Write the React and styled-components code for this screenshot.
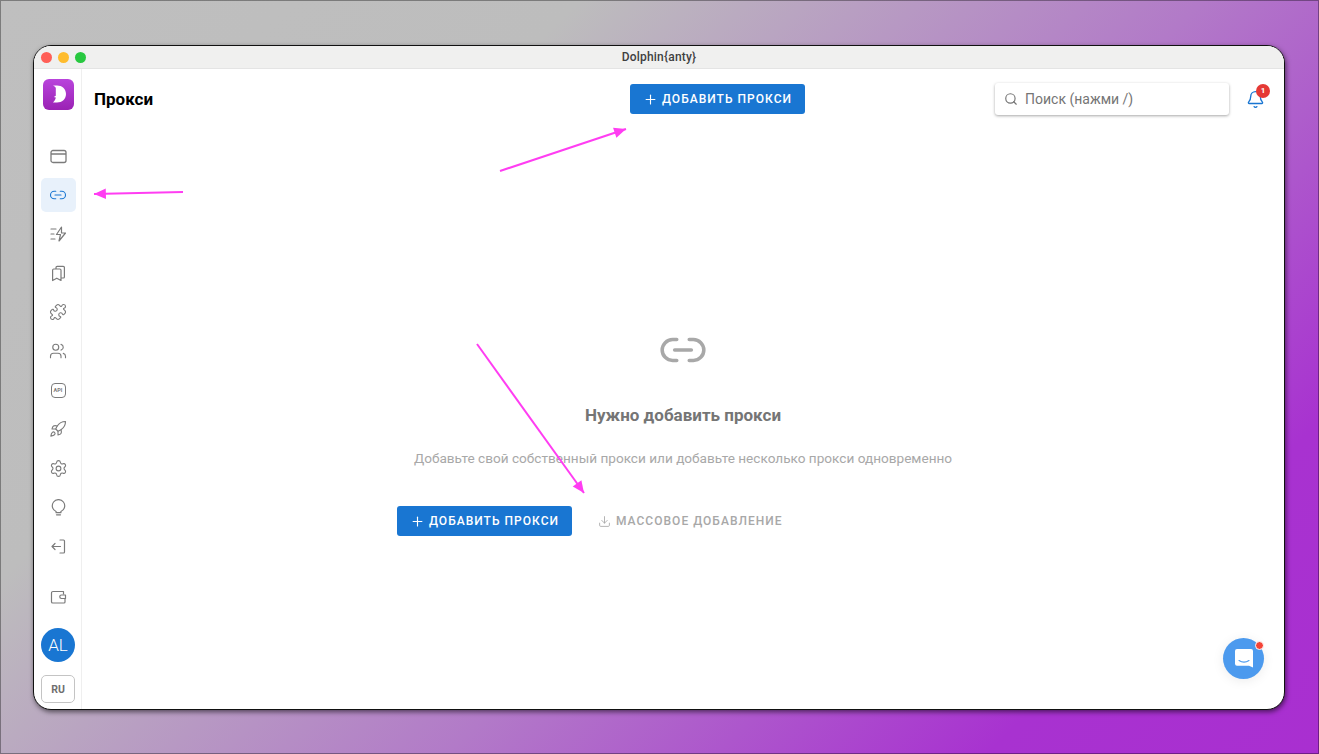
import React from 'react';
import styled, { createGlobalStyle } from 'styled-components';
import { Link2, Plus, Puzzle, Users, Rocket, Settings, Search, Bell, Download } from 'lucide-react';

const GlobalStyle = createGlobalStyle`
  html, body {
    margin: 0;
    padding: 0;
    height: 100%;
    overflow: hidden;
  }
  body {
    font-family: Roboto, "Liberation Sans", sans-serif;
  }
`;

const Page = styled.div`
  position: relative;
  box-sizing: border-box;
  width: 1319px;
  height: 754px;
  padding: 45px 34px 44px 33px;
  background: linear-gradient(135deg, #bfbfbf 0%, #bdbdbd 28%, #b27ac8 58%, #a832d0 84%, #a92fd0 100%);
  box-shadow: inset 0 0 0 1px rgba(0, 0, 0, 0.35);
`;

const Window = styled.div`
  display: flex;
  flex-direction: column;
  box-sizing: border-box;
  height: 100%;
  background: #fff;
  border: 1px solid #111;
  border-radius: 18px;
  overflow: hidden;
  box-shadow: 1px 2px 5px rgba(0, 0, 0, 0.55);
`;

const TitleBar = styled.div`
  position: relative;
  display: flex;
  align-items: center;
  justify-content: center;
  box-sizing: border-box;
  flex: 0 0 23px;
  background: #f0f0ef;
  border-bottom: 1px solid #e4e4e4;
  font-size: 12px;
  font-weight: 500;
  letter-spacing: 0.2px;
  color: #3f3f3f;
`;

const Lights = styled.div`
  position: absolute;
  left: 7px;
  top: 6px;
  display: flex;
  gap: 6px;
`;

const Light = styled.span`
  width: 11px;
  height: 11px;
  border-radius: 50%;
  background: ${(p) => p.color};
`;

const Body = styled.div`
  display: flex;
  flex: 1;
  min-height: 0;
`;

const Sidebar = styled.aside`
  display: flex;
  flex-direction: column;
  align-items: center;
  box-sizing: border-box;
  flex: 0 0 48px;
  padding: 10px 0 0 1px;
  border-right: 1px solid #efefef;
`;

const Logo = styled.div`
  width: 31px;
  height: 31px;
  margin-bottom: 29px;
`;

const Nav = styled.nav`
  display: flex;
  flex-direction: column;
  align-items: center;
  gap: 5px;
`;

const NavItem = styled.div`
  display: flex;
  align-items: center;
  justify-content: center;
  width: 35px;
  height: 34px;
  border-radius: 5px;
  color: ${(p) => (p.$active ? '#1976d2' : '#7b7b7b')};
  background: ${(p) => (p.$active ? '#e8f1fb' : 'transparent')};
`;

const ApiIcon = styled.div`
  display: flex;
  align-items: center;
  justify-content: center;
  box-sizing: border-box;
  width: 15px;
  height: 15px;
  border: 1.2px solid #7b7b7b;
  border-radius: 4px;
  font-size: 5.5px;
  font-weight: 700;
  color: #7b7b7b;
`;

const WalletItem = styled(NavItem)`
  margin-top: 17px;
`;

const Avatar = styled.div`
  display: flex;
  align-items: center;
  justify-content: center;
  width: 34px;
  height: 34px;
  margin-top: 14px;
  border-radius: 50%;
  background: #1976d2;
  color: #fff;
  font-size: 17px;
  font-weight: 300;
`;

const LangButton = styled.div`
  display: flex;
  align-items: center;
  justify-content: center;
  box-sizing: border-box;
  width: 34px;
  height: 28px;
  margin-top: 13px;
  border: 1px solid #c4c4c4;
  border-radius: 5px;
  font-size: 10.5px;
  font-weight: 700;
  color: #6f6f6f;
`;

const Main = styled.main`
  position: relative;
  display: flex;
  flex-direction: column;
  flex: 1;
  min-width: 0;
`;

const Header = styled.header`
  display: flex;
  align-items: center;
  padding: 14px 19px 0 12px;
`;

const PageTitle = styled.h1`
  flex: 0 0 536px;
  margin: 0;
  font-size: 17px;
  font-weight: 700;
  color: #000;
`;

const PrimaryButton = styled.button`
  display: flex;
  align-items: center;
  justify-content: center;
  gap: 4px;
  box-sizing: border-box;
  width: 175px;
  height: 30px;
  padding: 0;
  border: 0;
  border-radius: 3px;
  background: #1976d2;
  color: #fff;
  font-family: inherit;
  font-size: 12px;
  font-weight: 500;
  letter-spacing: 1.02px;
`;

const SearchBox = styled.div`
  display: flex;
  align-items: center;
  gap: 7px;
  box-sizing: border-box;
  width: 234px;
  height: 32px;
  margin-left: auto;
  padding-left: 9px;
  border-radius: 3px;
  background: #fff;
  box-shadow: 0 1px 3px rgba(0, 0, 0, 0.35);
  font-size: 14px;
  color: #757575;
`;

const BellWrap = styled.div`
  position: relative;
  display: flex;
  margin-left: 17px;
  color: #1976d2;
`;

const Badge = styled.span`
  position: absolute;
  top: -6px;
  right: -5px;
  display: flex;
  align-items: center;
  justify-content: center;
  width: 14px;
  height: 14px;
  border-radius: 50%;
  background: #e53935;
  color: #fff;
  font-size: 8px;
  font-weight: 700;
`;

const Empty = styled.section`
  display: flex;
  flex-direction: column;
  align-items: center;
  margin-top: 210px;
`;

const EmptyIcon = styled.div`
  display: flex;
  color: #a8a8a8;
`;

const EmptyTitle = styled.h2`
  margin: 30px 0 0;
  font-size: 17px;
  line-height: 20px;
  font-weight: 700;
  color: #757575;
`;

const EmptyText = styled.p`
  margin: 24px 0 0;
  font-size: 13.6px;
  line-height: 18px;
  color: #a8a8a8;
`;

const Actions = styled.div`
  display: flex;
  align-items: center;
  gap: 26px;
  width: 572px;
  margin-top: 39px;
`;

const GhostButton = styled.div`
  display: flex;
  align-items: center;
  gap: 5px;
  color: #a8a8a8;
  font-size: 12px;
  font-weight: 500;
  letter-spacing: 1.02px;
`;

const ChatButton = styled.div`
  position: absolute;
  right: 20px;
  bottom: 30px;
  display: flex;
  align-items: center;
  justify-content: center;
  width: 41px;
  height: 41px;
  border-radius: 50%;
  background: #4c9aee;
  box-shadow: 0 2px 12px rgba(0, 0, 0, 0.08);
`;

const ChatDot = styled.span`
  position: absolute;
  top: 3px;
  right: 0;
  width: 7px;
  height: 7px;
  border-radius: 50%;
  background: #f44336;
  border: 0.5px solid #fff;
`;

const Annotations = styled.svg`
  position: absolute;
  left: 0;
  top: 0;
  pointer-events: none;
`;

const iconProps = { size: 18, strokeWidth: 1.5 };

const WindowIcon = () => (
  <svg width="17" height="17" viewBox="0 0 17 17" fill="none" stroke="currentColor" strokeWidth="1.3">
    <rect x="1" y="2.5" width="15" height="12" rx="2" />
    <path d="M1 6h15" />
  </svg>
);

const ZapLinesIcon = () => (
  <svg width="17" height="17" viewBox="0 0 17 17" fill="none" stroke="currentColor" strokeWidth="1.2" strokeLinejoin="round" strokeLinecap="round">
    <path d="M1 3h5M1 8h3M1 13h4" />
    <path d="M11.5 1 6.500 8.500h4l-1.500 6.500 6.500-8h-4z" />
  </svg>
);

const CopiesIcon = () => (
  <svg width="17" height="17" viewBox="0 0 17 17" fill="none" stroke="currentColor" strokeWidth="1.2" strokeLinejoin="round">
    <path d="M6 4V2.500A1.200 1.200 0 0 1 7.200 1.300h6a1.200 1.200 0 0 1 1.200 1.200v9.500a1 1 0 0 1-1 1H11" />
    <path d="M3.800 4h6a1.200 1.200 0 0 1 1.200 1.200v10.300l-4.200-2.300-4.200 2.300V5.200A1.200 1.200 0 0 1 3.800 4z" />
  </svg>
);

const BulbIcon = () => (
  <svg width="17" height="17" viewBox="0 0 17 17" fill="none" stroke="currentColor" strokeWidth="1.2" strokeLinecap="round" strokeLinejoin="round">
    <path d="M6.100 12.500a6.200 6.200 0 1 1 4.800 0v1.200H6.100z" />
    <path d="M6.500 15.800h4" />
  </svg>
);

const ExitIcon = () => (
  <svg width="17" height="17" viewBox="0 0 17 17" fill="none" stroke="currentColor" strokeWidth="1.2" strokeLinecap="round" strokeLinejoin="round">
    <path d="M10 2h3.500a1 1 0 0 1 1 1v11a1 1 0 0 1-1 1H10" />
    <path d="M10.500 8.500H2M5 5.500l-3 3 3 3" />
  </svg>
);

const WalletIcon = () => (
  <svg width="17" height="17" viewBox="0 0 17 17" fill="none" stroke="currentColor" strokeWidth="1.2" strokeLinejoin="round">
    <path d="M3 2.500h10.500v3M15 9.500V13a1 1 0 0 1-1 1H2.800a1.300 1.300 0 0 1-1.300-1.300V4A1.500 1.500 0 0 1 3 2.500" />
    <path d="M11.500 6h4v3.500h-4a1.700 1.700 0 0 1 0-3.500z" />
  </svg>
);

const LogoMark = () => (
  <svg width="31" height="31" viewBox="0 0 31 31">
    <defs>
      <linearGradient id="logoFill" x1="0" y1="0" x2="0" y2="1">
        <stop offset="0" stopColor="#b944dc" />
        <stop offset="1" stopColor="#9a22b4" />
      </linearGradient>
    </defs>
    <rect width="31" height="31" rx="6" fill="url(#logoFill)" />
    <path d="M10 6.500h4c5 0 9 3.400 9 8.500s-4 8.500-9 8.500h-4c1.700-1.600 2.600-3.300 2.800-5l-2-.4 2-1.300V8.800c-.5-.8-1.600-1.600-2.800-2.300z" fill="#fff" />
  </svg>
);

const ChatIcon = () => (
  <svg width="20" height="21" viewBox="0 0 20 21">
    <path d="M3 1h14a2 2 0 0 1 2 2v16.500l-4-1.800H3a2 2 0 0 1-2-2V3a2 2 0 0 1 2-2z" fill="#fff" />
    <path d="M5 12.500c3 2 7 2 10 0" fill="none" stroke="#4c9aee" strokeWidth="1.100" strokeLinecap="round" />
  </svg>
);

const navItems = [
  { key: 'profiles', icon: <WindowIcon /> },
  { key: 'proxy', icon: <Link2 {...iconProps} />, active: true },
  { key: 'scenarios', icon: <ZapLinesIcon /> },
  { key: 'bookmarks', icon: <CopiesIcon /> },
  { key: 'extensions', icon: <Puzzle {...iconProps} /> },
  { key: 'team', icon: <Users {...iconProps} /> },
  { key: 'api', icon: <ApiIcon>API</ApiIcon> },
  { key: 'start', icon: <Rocket {...iconProps} /> },
  { key: 'settings', icon: <Settings size={19} strokeWidth={1.4} /> },
  { key: 'tips', icon: <BulbIcon /> },
  { key: 'exit', icon: <ExitIcon /> },
];

const arrows = [
  { from: [183, 192], to: [94, 194] },
  { from: [500, 171], to: [626, 129] },
  { from: [477, 344], to: [584, 493] },
];

const arrowHead = ({ from, to }) => {
  const angle = Math.atan2(to[1] - from[1], to[0] - from[0]);
  const point = (a, len) => `${to[0] - Math.cos(a) * len},${to[1] - Math.sin(a) * len}`;
  return `${to[0]},${to[1]} ${point(angle + 0.42, 13)} ${point(angle - 0.42, 13)}`;
};

export default function App() {
  return (
    <Page>
      <GlobalStyle />
      <Window>
        <TitleBar>
          <Lights>
            <Light color="#ff5f57" />
            <Light color="#febc2e" />
            <Light color="#28c840" />
          </Lights>
          Dolphin{'{'}anty{'}'}
        </TitleBar>
        <Body>
          <Sidebar>
            <Logo>
              <LogoMark />
            </Logo>
            <Nav>
              {navItems.map((item) => (
                <NavItem key={item.key} $active={item.active}>
                  {item.icon}
                </NavItem>
              ))}
            </Nav>
            <WalletItem>
              <WalletIcon />
            </WalletItem>
            <Avatar>AL</Avatar>
            <LangButton>RU</LangButton>
          </Sidebar>
          <Main>
            <Header>
              <PageTitle>Прокси</PageTitle>
              <PrimaryButton>
                <Plus size={15} strokeWidth={1.8} />
                ДОБАВИТЬ ПРОКСИ
              </PrimaryButton>
              <SearchBox>
                <Search size={14} strokeWidth={2} />
                Поиск (нажми /)
              </SearchBox>
              <BellWrap>
                <Bell size={19} strokeWidth={1.7} />
                <Badge>1</Badge>
              </BellWrap>
            </Header>
            <Empty>
              <EmptyIcon>
                <Link2 size={50} strokeWidth={1.7} />
              </EmptyIcon>
              <EmptyTitle>Нужно добавить прокси</EmptyTitle>
              <EmptyText>Добавьте свой собственный прокси или добавьте несколько прокси одновременно</EmptyText>
              <Actions>
                <PrimaryButton>
                  <Plus size={15} strokeWidth={1.8} />
                  ДОБАВИТЬ ПРОКСИ
                </PrimaryButton>
                <GhostButton>
                  <Download size={13} strokeWidth={1.6} />
                  МАССОВОЕ ДОБАВЛЕНИЕ
                </GhostButton>
              </Actions>
            </Empty>
            <ChatButton>
              <ChatIcon />
              <ChatDot />
            </ChatButton>
          </Main>
        </Body>
      </Window>
      <Annotations width="1319" height="754" viewBox="0 0 1319 754">
        {arrows.map((arrow) => (
          <g key={arrow.from.join()}>
            <line x1={arrow.from[0]} y1={arrow.from[1]} x2={arrow.to[0]} y2={arrow.to[1]} stroke="#ff3df2" strokeWidth="2" />
            <polygon points={arrowHead(arrow)} fill="#ff3df2" />
          </g>
        ))}
      </Annotations>
    </Page>
  );
}
